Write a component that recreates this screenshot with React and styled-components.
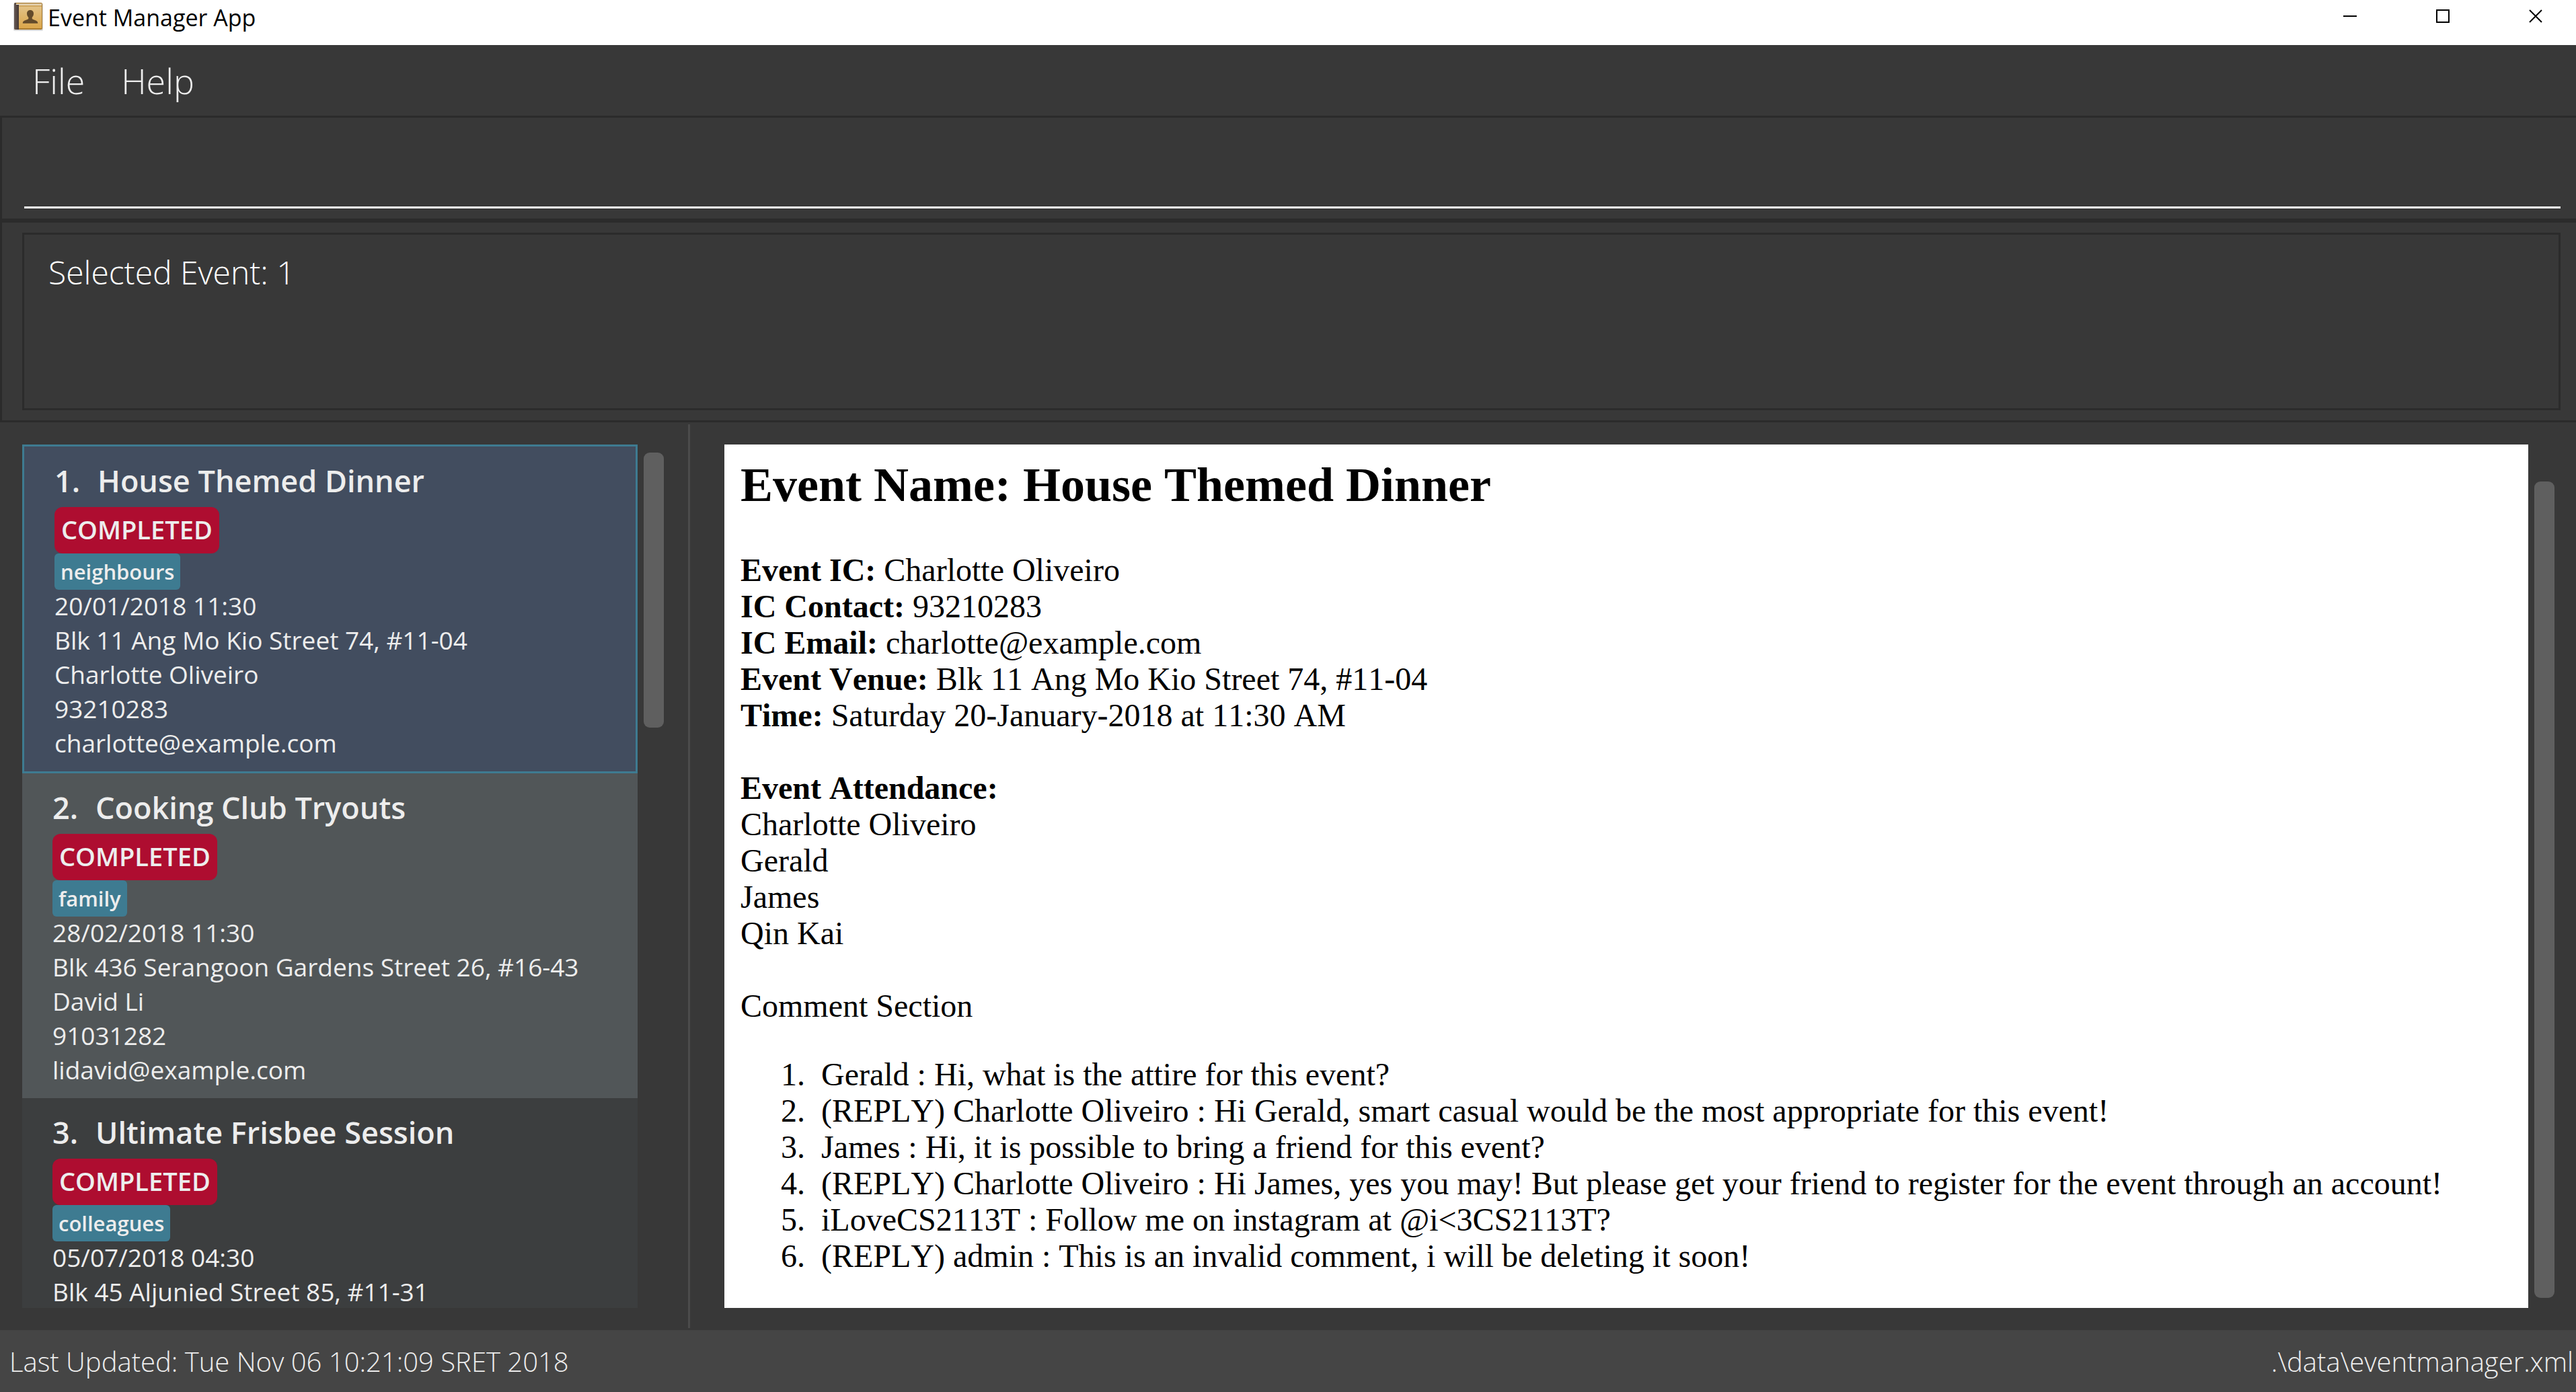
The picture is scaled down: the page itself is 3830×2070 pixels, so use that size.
import React from "react";
import styled, { createGlobalStyle } from "styled-components";

const color = {
  window: "#383838",
  edge: "#2b2b2b",
  accent: "#3e7b91",
  selected: "#424d5f",
  rowOdd: "#3c3e3f",
  rowEven: "#515658",
  completed: "#ae0d30",
  thumb: "#5f5f5f",
  footer: "#454545",
  text: "#ededed",
};

const GlobalStyle = createGlobalStyle`
  *, *::before, *::after { box-sizing: border-box; }
  body {
    margin: 0;
    background: ${color.window};
    font-family: "Open Sans", "Noto Sans", sans-serif;
    font-kerning: none;
  }
  button, input, textarea { font: inherit; font-kerning: none; color: inherit; }
`;

const Window = styled.div`
  display: flex;
  flex-direction: column;
  height: 100vh;
  overflow: hidden;
  background: ${color.window};
  color: ${color.text};
`;

/* Title bar */
const TitleBar = styled.header`
  display: flex;
  align-items: flex-start;
  height: 67px;
  flex: none;
  padding-left: 19px;
  overflow: hidden;
  background: #fff;
  color: #000;
`;

const AppIcon = styled.svg`
  width: 48px;
  height: 48px;
  flex: none;
`;

const WindowTitle = styled.h1`
  flex: 1;
  margin: 0 0 0 4px;
  font-size: 34px;
  font-weight: 400;
  line-height: 52px;
`;

const WindowControls = styled.div`
  display: flex;
  margin-right: -9px;
`;

const ControlButton = styled.button`
  display: flex;
  align-items: center;
  justify-content: center;
  width: 138px;
  height: 48px;
  padding: 0;
  border: 0;
  background: none;
`;

const ControlGlyph = styled.svg`
  width: 20px;
  height: 20px;
  fill: none;
  stroke: #000;
  stroke-width: 2;
`;

/* Menu */
const MenuBar = styled.nav`
  display: flex;
  align-items: center;
  height: 105px;
  flex: none;
  padding-left: 21px;
`;

const MenuButton = styled.button`
  padding: 0 27px;
  border: 0;
  background: none;
  font-size: 52px;
  font-weight: 300;
  line-height: 70px;
`;

/* Command box and result display */
const CommandPane = styled.form`
  flex: none;
  padding: 0 23px 15px 33px;
  border: solid ${color.edge};
  border-width: 3px 0 3px 3px;
`;

const CommandInput = styled.input`
  display: block;
  width: 100%;
  height: 135px;
  padding: 0 24px;
  border: 0;
  border-bottom: 3px solid #fff;
  outline: 0;
  background: transparent;
  font-size: 48px;
  font-weight: 300;
`;

const ResultPane = styled.section`
  flex: none;
  padding: 15px 23px 15px 30px;
  border: solid ${color.edge};
  border-width: 3px 0 3px 3px;
`;

const ResultText = styled.textarea`
  display: block;
  width: 100%;
  height: 264px;
  padding: 20px 36px;
  border: 3px solid ${color.edge};
  outline: 0;
  resize: none;
  overflow: hidden;
  background: transparent;
  color: #fff;
  font-size: 48px;
  font-weight: 300;
  line-height: 72px;
`;

/* Split view */
const SplitView = styled.main`
  display: grid;
  grid-template-columns: minmax(0, 1023fr) 3px minmax(0, 2804fr);
  grid-template-rows: minmax(0, 1fr);
  flex: 1;
  min-height: 0;
`;

const Divider = styled.div`
  margin: 3px 0;
  background: #4b4b4b;
`;

const ListPane = styled.section`
  display: flex;
  gap: 9px;
  padding: 33px 36px 33px 33px;
`;

const DetailPane = styled.section`
  display: flex;
  gap: 9px;
  padding: 33px 32px 33px 51px;
`;

const Track = styled.div`
  display: flex;
  flex-direction: column;
  width: 30px;
  flex: none;
  padding: ${(p) => p.$inset};
`;

const Thumb = styled.div`
  height: ${(p) => p.$size};
  border-radius: 9px;
  background: ${color.thumb};
`;

/* Event list */
const EventList = styled.ol`
  flex: 1;
  min-width: 0;
  margin: 0;
  padding: 0;
  overflow: hidden;
  list-style: none;
`;

const EventCard = styled.li`
  padding: 15px 45px;
  background: ${(p) => (p.$even ? color.rowEven : color.rowOdd)};
  ${(p) =>
    p.$selected &&
    `
    background: ${color.selected};
    border: 3px solid ${color.accent};
  `}
`;

const CardTitle = styled.h2`
  display: flex;
  gap: 26px;
  margin: 0;
  padding-bottom: 3px;
  font-size: 45px;
  font-weight: 600;
  line-height: 72px;
`;

const BadgeRow = styled.div`
  display: flex;
`;

const StatusBadge = styled.span`
  padding: 6px 10px 9px;
  border-radius: 12px;
  background: ${color.completed};
  font-size: 38px;
  font-weight: 600;
  line-height: 54px;
`;

const TagBadge = styled.span`
  padding: 0 9px;
  border-radius: 6px;
  background: ${color.accent};
  font-size: 31px;
  font-weight: 600;
  line-height: 54px;
`;

const CardDetails = styled.div`
  display: grid;
  gap: 3px;
  padding-bottom: 3px;
  font-size: 37px;
  font-weight: 400;
  line-height: 48px;
  white-space: nowrap;
`;

/* Event page */
const EventPage = styled.article`
  flex: 1;
  min-width: 0;
  padding: 20px 24px;
  overflow: hidden;
  background: #fff;
  color: #000;
  font-family: "Liberation Serif", "Times New Roman", serif;
  font-size: 48px;
  line-height: 54px;
`;

const PageHeading = styled.h2`
  margin: 0 0 60px;
  font-size: 72px;
  line-height: 80px;
`;

const PageBlock = styled.div`
  margin-bottom: 54px;
`;

const CommentList = styled.ol`
  margin: -6px 0 0;
  padding-left: 108px;
`;

const Comment = styled.li`
  padding-left: 12px;
`;

/* Status bar */
const StatusBar = styled.footer`
  display: flex;
  align-items: center;
  justify-content: space-between;
  height: 92px;
  flex: none;
  padding: 0 4px 0 14px;
  background: ${color.footer};
  font-size: 40px;
  font-weight: 300;
`;

const events = [
  {
    name: "House Themed Dinner",
    status: "COMPLETED",
    tag: "neighbours",
    details: [
      "20/01/2018 11:30",
      "Blk 11 Ang Mo Kio Street 74, #11-04",
      "Charlotte Oliveiro",
      "93210283",
      "charlotte@example.com",
    ],
  },
  {
    name: "Cooking Club Tryouts",
    status: "COMPLETED",
    tag: "family",
    details: [
      "28/02/2018 11:30",
      "Blk 436 Serangoon Gardens Street 26, #16-43",
      "David Li",
      "91031282",
      "lidavid@example.com",
    ],
  },
  {
    name: "Ultimate Frisbee Session",
    status: "COMPLETED",
    tag: "colleagues",
    details: ["05/07/2018 04:30", "Blk 45 Aljunied Street 85, #11-31"],
  },
];

const facts = [
  ["Event IC:", "Charlotte Oliveiro"],
  ["IC Contact:", "93210283"],
  ["IC Email:", "charlotte@example.com"],
  ["Event Venue:", "Blk 11 Ang Mo Kio Street 74, #11-04"],
  ["Time:", "Saturday 20-January-2018 at 11:30 AM"],
];

const attendees = ["Charlotte Oliveiro", "Gerald", "James", "Qin Kai"];

const comments = [
  "Gerald : Hi, what is the attire for this event?",
  "(REPLY) Charlotte Oliveiro : Hi Gerald, smart casual would be the most appropriate for this event!",
  "James : Hi, it is possible to bring a friend for this event?",
  "(REPLY) Charlotte Oliveiro : Hi James, yes you may! But please get your friend to register for the event through an account!",
  "iLoveCS2113T : Follow me on instagram at @i<3CS2113T?",
  "(REPLY) admin : This is an invalid comment, i will be deleting it soon!",
];

function AddressBookIcon() {
  return (
    <AppIcon viewBox="0 0 48 48" aria-hidden="true">
      <defs>
        <linearGradient id="cover" x1="0" y1="0" x2="0" y2="1">
          <stop offset="0" stopColor="#e3c48a" />
          <stop offset="1" stopColor="#dba64a" />
        </linearGradient>
        <linearGradient id="spine" x1="0" y1="0" x2="1" y2="0">
          <stop offset="0" stopColor="#675a56" />
          <stop offset="1" stopColor="#453833" />
        </linearGradient>
      </defs>
      <rect x="1" y="5" width="44" height="41" rx="2" fill="#000" opacity="0.14" />
      <rect x="2" y="4" width="42" height="40" rx="2" fill="#a87b32" />
      <rect x="9" y="8" width="34" height="34" fill="url(#cover)" />
      <path d="M4 6.500H43" stroke="#f1e6cf" strokeWidth="2" />
      <path d="M9 9.500H43" stroke="#c79a4d" strokeWidth="1" />
      <path d="M2 6a2 2 0 0 1 2-2h1v3h4v37H4a2 2 0 0 1-2-2z" fill="url(#spine)" />
      <path
        d="M26 15c-3.200 0-5 2.200-5 5.200 0 2.400 1 4.300 2.300 5.600v2.200c-1.300 1.600-7.300 2.200-8.300 5-.2.600-.2 1.200-.2 1.800h22.400c0-.6 0-1.200-.2-1.800-1-2.800-7-3.400-8.300-5v-2.200c1.300-1.300 2.300-3.200 2.300-5.600 0-3-1.800-5.200-5-5.200z"
        fill="#634b2b"
      />
    </AppIcon>
  );
}

export default function App() {
  return (
    <>
      <GlobalStyle />
      <Window>
        <TitleBar>
          <AddressBookIcon />
          <WindowTitle>Event Manager App</WindowTitle>
          <WindowControls>
            <ControlButton type="button" aria-label="Minimize">
              <ControlGlyph viewBox="0 0 20 20">
                <path d="M0 10H20" />
              </ControlGlyph>
            </ControlButton>
            <ControlButton type="button" aria-label="Maximize">
              <ControlGlyph viewBox="0 0 20 20">
                <rect x="1" y="1" width="18" height="18" />
              </ControlGlyph>
            </ControlButton>
            <ControlButton type="button" aria-label="Close">
              <ControlGlyph viewBox="0 0 20 20">
                <path d="M1 1L19 19M19 1L1 19" />
              </ControlGlyph>
            </ControlButton>
          </WindowControls>
        </TitleBar>

        <MenuBar aria-label="Main menu">
          <MenuButton type="button">File</MenuButton>
          <MenuButton type="button">Help</MenuButton>
        </MenuBar>

        <CommandPane onSubmit={(e) => e.preventDefault()}>
          <CommandInput type="text" aria-label="Command" />
        </CommandPane>

        <ResultPane>
          <ResultText readOnly aria-label="Result" value="Selected Event: 1" />
        </ResultPane>

        <SplitView>
          <ListPane aria-label="Events">
            <EventList>
              {events.map((event, i) => (
                <EventCard key={event.name} $selected={i === 0} $even={i % 2 === 1}>
                  <CardTitle>
                    <span>{i + 1}.</span>
                    <span>{event.name}</span>
                  </CardTitle>
                  <BadgeRow>
                    <StatusBadge>{event.status}</StatusBadge>
                  </BadgeRow>
                  <BadgeRow>
                    <TagBadge>{event.tag}</TagBadge>
                  </BadgeRow>
                  <CardDetails>
                    {event.details.map((line) => (
                      <span key={line}>{line}</span>
                    ))}
                  </CardDetails>
                </EventCard>
              ))}
            </EventList>
            <Track $inset="12px 0">
              <Thumb $size="409px" />
            </Track>
          </ListPane>

          <Divider />

          <DetailPane aria-label="Event details">
            <EventPage>
              <PageHeading>Event Name: House Themed Dinner</PageHeading>
              <PageBlock>
                {facts.map(([label, value]) => (
                  <div key={label}>
                    <b>{label}</b> {value}
                  </div>
                ))}
              </PageBlock>
              <PageBlock>
                <b>Event Attendance:</b>
                {attendees.map((name) => (
                  <div key={name}>{name}</div>
                ))}
              </PageBlock>
              <PageBlock>Comment Section</PageBlock>
              <CommentList>
                {comments.map((comment) => (
                  <Comment key={comment}>{comment}</Comment>
                ))}
              </CommentList>
            </EventPage>
            <Track $inset="55px 0 15px">
              <Thumb $size="100%" />
            </Track>
          </DetailPane>
        </SplitView>

        <StatusBar>
          <span>Last Updated: Tue Nov 06 10:21:09 SRET 2018</span>
          <span>.\data\eventmanager.xml</span>
        </StatusBar>
      </Window>
    </>
  );
}
